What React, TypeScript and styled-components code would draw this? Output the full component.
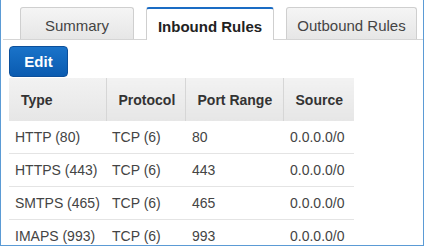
import React from "react";
import styled, { createGlobalStyle } from "styled-components";

const GlobalStyle = createGlobalStyle`
  body {
    margin: 0;
    font-family: "Liberation Sans", Arial, sans-serif;
    background: #fff;
  }
`;

const rules = [
  { type: "HTTP (80)", protocol: "TCP (6)", port: "80", source: "0.0.0.0/0" },
  { type: "HTTPS (443)", protocol: "TCP (6)", port: "443", source: "0.0.0.0/0" },
  { type: "SMTPS (465)", protocol: "TCP (6)", port: "465", source: "0.0.0.0/0" },
  { type: "IMAPS (993)", protocol: "TCP (6)", port: "993", source: "0.0.0.0/0" },
];

const columns = [
  { label: "Type", width: 97 },
  { label: "Protocol", width: 79 },
  { label: "Port Range", width: 98 },
  { label: "Source", width: 71 },
];

function App() {
  return (
    <>
      <GlobalStyle />
      <Frame>
        <TabBar>
          <Tab $width={114}>Summary</Tab>
          <Tab $width={128} $active>
            Inbound Rules
          </Tab>
          <Tab $width={131}>Outbound Rules</Tab>
        </TabBar>
        <Panel>
          <EditButton>Edit</EditButton>
          <Table>
            <colgroup>
              {columns.map((c) => (
                <col key={c.label} style={{ width: c.width }} />
              ))}
            </colgroup>
            <thead>
              <tr>
                {columns.map((c) => (
                  <HeadCell key={c.label}>{c.label}</HeadCell>
                ))}
              </tr>
            </thead>
            <tbody>
              {rules.map((r, i) => (
                <Row key={r.type} $last={i === rules.length - 1}>
                  <Cell>{r.type}</Cell>
                  <Cell>{r.protocol}</Cell>
                  <Cell>{r.port}</Cell>
                  <Cell>{r.source}</Cell>
                </Row>
              ))}
            </tbody>
          </Table>
        </Panel>
      </Frame>
    </>
  );
}

export default App;

const Frame = styled.div`
  width: 424px;
  height: 246px;
  box-sizing: border-box;
  border: 1px solid #5b9bd5;
  border-top: none;
  overflow: hidden;
  background: #fff;
`;

const TabBar = styled.div`
  display: flex;
  gap: 12px;
  margin: 0 0 0 2px;
  padding: 7px 0 0 17px;
  border-bottom: 1px solid #d5d5d5;
  height: 32px;
`;

const Tab = styled.div<{ $active?: boolean; $width: number }>`
  width: ${(p) => p.$width}px;
  box-sizing: border-box;
  height: ${(p) => (p.$active ? 33 : 32)}px;
  display: flex;
  align-items: center;
  justify-content: center;
  font-size: 15px;
  color: ${(p) => (p.$active ? "#222" : "#444")};
  font-weight: ${(p) => (p.$active ? "bold" : "normal")};
  border: 1px solid #cfcfcf;
  border-bottom: none;
  border-top: ${(p) => (p.$active ? "2px solid #1a6cc4" : "1px solid #cfcfcf")};
  border-radius: 3px 3px 0 0;
  background: ${(p) =>
    p.$active ? "#fff" : "linear-gradient(#f5f5f5, #e6e6e6)"};
  padding-top: ${(p) => (p.$active ? 4 : 3)}px;
`;

const Panel = styled.div`
  padding: 6px 0 0 8px;
`;

const EditButton = styled.button`
  display: block;
  width: 59px;
  height: 31px;
  padding: 0;
  border: 1px solid #0c4f9a;
  border-radius: 4px;
  background: linear-gradient(#1a73c9, #0a5bb0);
  color: #fff;
  font-family: "Liberation Sans", Arial, sans-serif;
  font-size: 15px;
  font-weight: bold;
`;

const Table = styled.table`
  margin-top: 1px;
  width: 345px;
  border-collapse: collapse;
  table-layout: fixed;
`;

const HeadCell = styled.th`
  height: 43px;
  padding: 0 0 0 12px;
  text-align: left;
  font-size: 14px;
  font-weight: bold;
  color: #333;
  background: linear-gradient(#f2f2f2, #e6e6e6);
  border-right: 1px solid #d6d6d6;
  box-sizing: border-box;
  &:last-child {
    border-right: none;
  }
`;

const Row = styled.tr<{ $last?: boolean }>`
  border-bottom: ${(p) => (p.$last ? "none" : "1px solid #e4e4e4")};
`;

const Cell = styled.td`
  height: 32px;
  padding: 0 0 0 7px;
  font-size: 14px;
  color: #444;
  white-space: nowrap;
  &:first-child,
  &:nth-child(2) {
    padding-left: 6px;
  }
`;
